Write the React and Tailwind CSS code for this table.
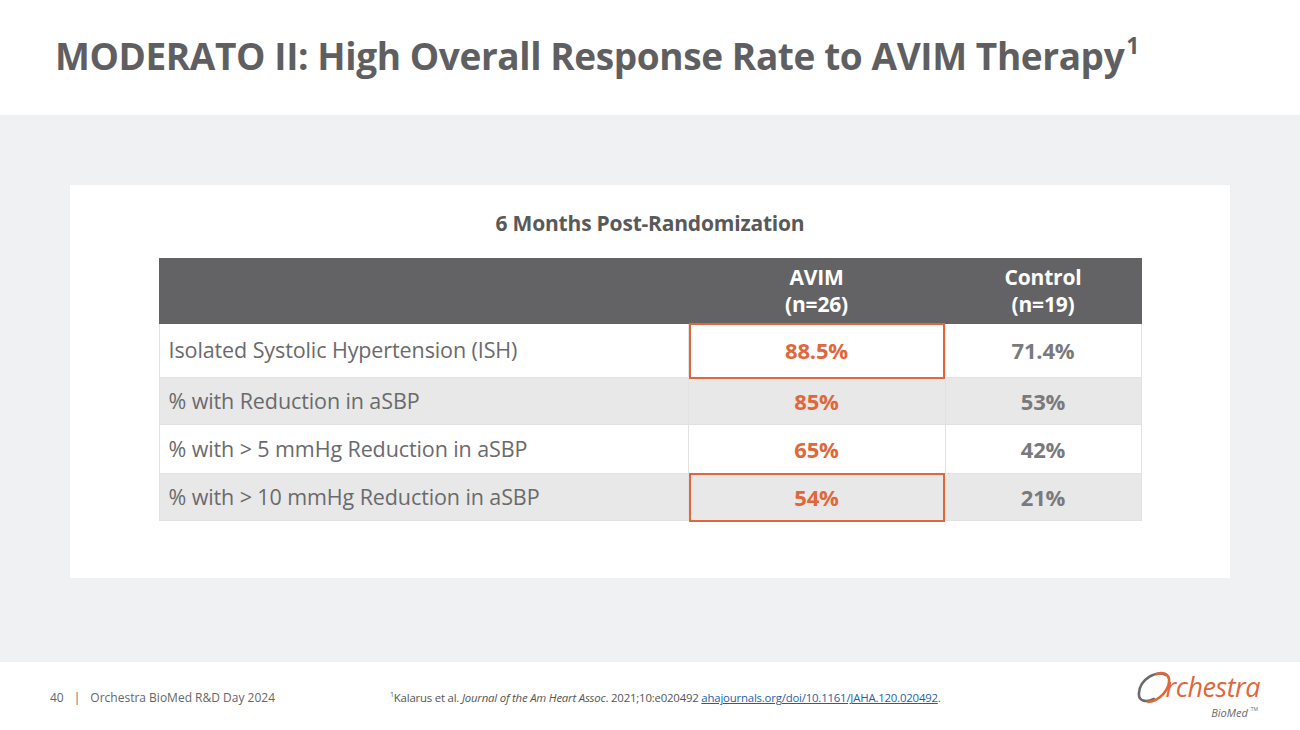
const rows = [
  { label: 'Isolated Systolic Hypertension (ISH)', avim: '88.5%', control: '71.4%', boxed: true, shaded: false, h: 'h-[54px]' },
  { label: '% with Reduction in aSBP', avim: '85%', control: '53%', boxed: false, shaded: true, h: 'h-[47px]' },
  { label: '% with > 5 mmHg Reduction in aSBP', avim: '65%', control: '42%', boxed: false, shaded: false, h: 'h-[49px]' },
  { label: '% with > 10 mmHg Reduction in aSBP', avim: '54%', control: '21%', boxed: true, shaded: true, h: 'h-[47px]' },
];

const Logo = () => (
  <div className="flex flex-col items-end leading-none mb-[6px]">
    <div className="flex items-end">
      <svg width="36" height="34" viewBox="0 0 36 34" className="-mr-[6px] mb-[-3px]">
        <path d="M30 4 C 20 -1, 4 8, 3 22 C 2 30, 10 32, 18 28" fill="none" stroke="#6b6b6e" strokeWidth="2.6" strokeLinecap="round" />
        <path d="M12 31 C 24 30, 34 18, 33 8 C 32 2, 26 1, 21 3" fill="none" stroke="#e0673a" strokeWidth="2.6" strokeLinecap="round" />
      </svg>
      <span className="text-[27px] leading-[30px] italic text-[#e0673a] tracking-[-0.5px]">rchestra</span>
    </div>
    <div className="flex items-start gap-[3px] mr-[2px] mt-[5px] text-[#6b6b6e]">
      <span className="text-[11px] leading-[12px] italic">BioMed</span>
      <span className="text-[5px] leading-none">TM</span>
    </div>
  </div>
);

export default function App() {
  return (
    <div className="w-[1300px] h-[730px] flex flex-col bg-white font-['Open_Sans',sans-serif] text-[#5f5f62]">
      <div className="h-[115px] flex items-start pl-[55px] pt-[37px]">
        <h1 className="text-[37px] font-bold tracking-[-0.4px] text-[#5f5f62] leading-none flex items-start">
          <span>MODERATO II: High Overall Response Rate to AVIM Therapy</span>
          <span className="text-[23px] leading-none ml-[2px] -mt-[3px]">1</span>
        </h1>
      </div>
      <div className="h-[547px] bg-[#f0f1f3] pt-[70px] px-[70px]">
        <div className="h-[393px] bg-white flex flex-col items-center pt-[28px]">
          <div className="text-[21px] font-bold text-[#595959] tracking-[-0.2px] leading-none">6 Months Post-Randomization</div>
          <div className="mt-[24px] w-[983px] flex flex-col">
            <div className="h-[66px] bg-[#636366] flex text-white font-bold text-[21px] leading-[27px] tracking-[-0.2px]">
              <div className="w-[530px]" />
              <div className="w-[256px] flex flex-col items-center justify-center">
                <span>AVIM</span>
                <span>(n=26)</span>
              </div>
              <div className="w-[197px] flex flex-col items-center justify-center">
                <span>Control</span>
                <span>(n=19)</span>
              </div>
            </div>
            {rows.map((r) => (
              <div key={r.label} className={`${r.h} flex ${r.shaded ? 'bg-[#e8e8e8]' : 'bg-white'} border-b border-[#e2e2e2]`}>
                <div className="w-[530px] flex items-center pl-[9px] text-[21.5px] text-[#6a6a6d] tracking-[-0.1px] border-r border-[#e2e2e2] border-l">
                  {r.label}
                </div>
                <div className="w-[256px] relative flex items-center justify-center text-[22px] font-bold text-[#e0673a] tracking-[-0.2px]">
                  {r.boxed && <div className="absolute -top-[1px] -bottom-[2px] left-0 right-0 border-2 border-[#e0673a]" />}
                  {r.avim}
                </div>
                <div className="w-[197px] flex items-center justify-center text-[22px] font-bold text-[#7a7a7d] tracking-[-0.2px] border-l border-r border-[#e2e2e2]">
                  {r.control}
                </div>
              </div>
            ))}
          </div>
        </div>
      </div>
      <div className="flex-1 flex items-center pl-[50px] pr-[40px] pt-[4px]">
        <div className="w-[340px] text-[12px] text-[#666] flex items-center gap-[10px]">
          <span>40</span>
          <span>|</span>
          <span>Orchestra BioMed R&amp;D Day 2024</span>
        </div>
        <div className="text-[11.4px] text-[#555] tracking-[-0.2px] flex items-start">
          <span className="text-[7px] leading-none mt-[2px]">1</span>
          <span>
            Kalarus et al. <i>Journal of the Am Heart Assoc</i>. 2021;10:e020492{' '}
            <span className="text-[#1f5fa8] underline">ahajournals.org/doi/10.1161/JAHA.120.020492</span>.
          </span>
        </div>
        <div className="ml-auto">
          <Logo />
        </div>
      </div>
    </div>
  );
}
